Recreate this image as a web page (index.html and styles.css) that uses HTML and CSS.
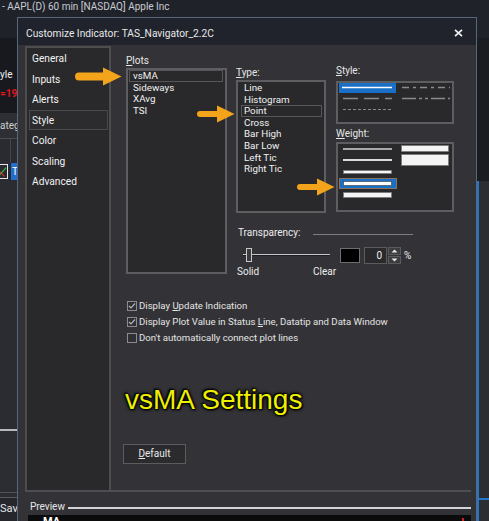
FILE: index.html
```html
<!DOCTYPE html>
<html lang="en">
<head>
<meta charset="utf-8">
<title>Customize Indicator</title>
<link rel="stylesheet" href="styles.css">
</head>
<body>
<div class="app">
  <div class="app-title">- AAPL(D) 60 min [NASDAQ] Apple Inc</div>
  <div class="app-body">
    <div class="strip-left">
      <div class="sl-a"><div class="sl-yle">yle</div><div class="sl-red">=19</div></div>
      <div class="sl-b">ateg</div>
      <div class="sl-c"><div class="sl-c-cell"></div></div>
      <div class="sl-d">
        <span class="sl-icon"><svg width="8" height="13" viewBox="0 0 8 13"><path d="M0 10 L7 2" stroke="#2fbf3a" stroke-width="1.3"/><path d="M0 7 L5 12" stroke="#e0302a" stroke-width="1.2"/></svg></span>
        <span class="sl-t">T</span>
      </div>
      <div class="sl-e"></div>
      <div class="sl-f"></div>
      <div class="sl-save">Sav</div>
    </div>
    <div class="strip-right">
      <div class="sr-a"></div>
      <div class="sr-b"></div>
      <div class="sr-c"></div>
    </div>
  </div>
</div>

<div class="dialog">
  <div class="titlebar">
    <span class="title">Customize Indicator: TAS_Navigator_2.2C</span>
    <svg class="close" width="9" height="8" viewBox="0 0 9 8"><path d="M1 0.8 L8 7.2 M8 0.8 L1 7.2" stroke="#f2f2f2" stroke-width="1.7"/></svg>
  </div>
  <div class="dbody">
    <div class="main">
      <nav class="nav">
        <div class="nav-item">General</div>
        <div class="nav-item">Inputs</div>
        <div class="nav-item">Alerts</div>
        <div class="nav-item sel">Style</div>
        <div class="nav-item">Color</div>
        <div class="nav-item">Scaling</div>
        <div class="nav-item">Advanced</div>
      </nav>
      <div class="content">
        <div class="top-row">
          <div class="plots">
            <div class="lbl"><u>P</u>lots</div>
            <div class="listbox plots-list">
              <div class="li sel">vsMA</div>
              <div class="li">Sideways</div>
              <div class="li">XAvg</div>
              <div class="li">TSI</div>
            </div>
          </div>
          <div class="right">
            <div class="right-top">
              <div class="type">
                <div class="lbl"><u>T</u>ype:</div>
                <div class="listbox type-list">
                  <div class="li">Line</div>
                  <div class="li">Histogram</div>
                  <div class="li sel">Point</div>
                  <div class="li">Cross</div>
                  <div class="li">Bar High</div>
                  <div class="li">Bar Low</div>
                  <div class="li">Left Tic</div>
                  <div class="li">Right Tic</div>
                </div>
              </div>
              <div class="style-col">
                <div class="lbl"><u>S</u>tyle:</div>
                <div class="gbox style-box">
                  <svg width="114" height="39" viewBox="0 0 114 39">
                    <rect x="1" y="0" width="57" height="10" fill="#1a6fc6"/>
                    <line x1="4" y1="4.5" x2="54" y2="4.5" stroke="#ffffff" stroke-width="1.5"/>
                    <line x1="64" y1="4.5" x2="112" y2="4.5" stroke="#8a8a8a" stroke-width="1.5" stroke-dasharray="7 4 3 4"/>
                    <line x1="5" y1="15.5" x2="54" y2="15.5" stroke="#8a8a8a" stroke-width="1.5" stroke-dasharray="15 6"/>
                    <line x1="64" y1="15.5" x2="112" y2="15.5" stroke="#8a8a8a" stroke-width="1.5" stroke-dasharray="14 3 3 3 3 3"/>
                    <line x1="5" y1="26.5" x2="54" y2="26.5" stroke="#8a8a8a" stroke-width="1.2" stroke-dasharray="3 2"/>
                  </svg>
                </div>
                <div class="lbl weight-lbl"><u>W</u>eight:</div>
                <div class="gbox weight-box">
                  <svg width="114" height="66" viewBox="0 0 114 66">
                    <rect x="5" y="4" width="49" height="2" fill="#a8a8a8"/>
                    <rect x="5" y="15" width="49" height="2" fill="#dcdcdc"/>
                    <rect x="5.5" y="26.5" width="48" height="3" fill="#f4f4f4" stroke="#7a7a7a" stroke-width="0.8"/>
                    <rect x="1.5" y="34.5" width="57" height="10" fill="#1a6fc6" stroke="#8a7460" stroke-width="1"/>
                    <rect x="5.5" y="37.5" width="48" height="4" fill="#ffffff" stroke="#3a3a3a" stroke-width="0.6"/>
                    <rect x="5.5" y="48.5" width="48" height="5" fill="#f4f4f4" stroke="#7a7a7a" stroke-width="0.8"/>
                    <rect x="63.5" y="1.5" width="47" height="6" fill="#f4f4f4" stroke="#7a7a7a" stroke-width="0.8"/>
                    <rect x="63.5" y="10.5" width="47" height="11" fill="#f4f4f4" stroke="#7a7a7a" stroke-width="0.8"/>
                  </svg>
                </div>
              </div>
            </div>
            <div class="transp">
              <div class="transp-head"><span class="transp-lbl">Transparency:</span><span class="transp-line"></span></div>
              <div class="transp-ctrl">
                <div class="slider"><div class="track"></div><div class="thumb"></div></div>
                <div class="swatch"></div>
                <div class="spin-val">0</div>
                <div class="spin-btns">
                  <div class="spin-btn"><svg width="7" height="4" viewBox="0 0 7 4"><path d="M0.5 3.5 L3.5 0.5 L6.5 3.5 Z" fill="#e8e8e8"/></svg></div>
                  <div class="spin-btn"><svg width="7" height="4" viewBox="0 0 7 4"><path d="M0.5 0.5 L3.5 3.5 L6.5 0.5 Z" fill="#e8e8e8"/></svg></div>
                </div>
                <div class="pct">%</div>
              </div>
              <div class="transp-ends"><span class="solid">Solid</span><span>Clear</span></div>
            </div>
          </div>
        </div>
        <div class="checks">
          <div class="check-row"><span class="cb"><svg width="8" height="8" viewBox="0 0 8 8"><path d="M1 4 L3 6 L7 1.5" stroke="#b4b4b4" fill="none" stroke-width="1.2"/></svg></span><span class="check-lbl">Display <u>U</u>pdate Indication</span></div>
          <div class="check-row"><span class="cb"><svg width="8" height="8" viewBox="0 0 8 8"><path d="M1 4 L3 6 L7 1.5" stroke="#b4b4b4" fill="none" stroke-width="1.2"/></svg></span><span class="check-lbl">Display Plot Value in Status <u>L</u>ine, Datatip and Data Window</span></div>
          <div class="check-row"><span class="cb"></span><span class="check-lbl">Don't automatically connect plot lines</span></div>
        </div>
        <div class="headline">vsMA Settings</div>
        <div class="btn"><u>D</u>efault</div>
      </div>
    </div>
    <div class="preview">
      <div class="preview-head"><span class="preview-lbl">Preview</span><span class="preview-line"></span></div>
      <div class="preview-box"><span class="preview-ma">MA</span><span class="preview-red"></span></div>
    </div>
  </div>
</div>

<svg class="arrow a1" width="47" height="19" viewBox="0 0 47 19"><path d="M4 5.5 H28 V0.5 L46.5 9.5 L28 18.5 V13.5 H4 A4 4 0 0 1 4 5.5 Z" fill="#f3a41b"/></svg>
<svg class="arrow a2" width="38" height="18" viewBox="0 0 38 18"><path d="M3 6 H20 V0.5 L37.5 9 L20 17.5 V12 H3 A3 3 0 0 1 3 6 Z" fill="#f3a41b"/></svg>
<svg class="arrow a3" width="38" height="18" viewBox="0 0 38 18"><path d="M3 6 H20 V0.5 L37.5 9 L20 17.5 V12 H3 A3 3 0 0 1 3 6 Z" fill="#f3a41b"/></svg>
</body>
</html>
```

FILE: styles.css
```css
* { box-sizing: border-box; }
html, body { margin: 0; padding: 0; }
body {
  width: 489px;
  height: 521px;
  overflow: hidden;
  position: relative;
  background: #2b2d33;
  font-family: Roboto, "Noto Sans", sans-serif;
  font-size: 10px;
  color: #ececec;
}
u { text-decoration: underline; text-underline-offset: 1px; }

/* backdrop application window */
.app { display: flex; flex-direction: column; height: 521px; }
.app-title {
  height: 38px;
  background: #20222a;
  padding: 1px 0 0 2px;
  line-height: 12px;
  color: #c9cbd0;
}
.app-body { flex: 1; display: flex; justify-content: space-between; }
.strip-left { width: 17px; display: flex; flex-direction: column; overflow: hidden; }
.sl-a { height: 75px; background: #18191e; padding-top: 31px; line-height: 12px; white-space: nowrap; }
.sl-yle { color: #f0f0f0; }
.sl-red { color: #e0161e; font-weight: bold; margin-top: 7px; }
.sl-b { height: 25px; background: #2e2f34; line-height: 25px; color: #cfcfcf; white-space: nowrap; overflow: hidden; }
.sl-c { height: 24px; background: #2a2b30; border-top: 1px solid #4a4b50; display: flex; }
.sl-c-cell { width: 11px; border-right: 1px solid #45464c; }
.sl-d { height: 19px; background: #2a2b30; display: flex; align-items: center; gap: 3px; }
.sl-icon { width: 8px; height: 15px; border: 1px solid #e8e8e8; border-left: none; display: flex; align-items: center; }
.sl-t { width: 7px; height: 17px; background: #1e6fd0; color: #fff; line-height: 17px; padding-left: 1px; }
.sl-e { flex: 1; background: #2a2c32; }
.sl-f { height: 64px; border-top: 2px solid #b8b8bc; background: #2b2d33; border-bottom: 1px solid #50525a; }
.sl-save { height: 24px; margin-top: 4px; border-top: 1px solid #5a5a5e; background: #25272c; font-size: 11px; line-height: 22px; color: #e6e6e6; white-space: nowrap; overflow: hidden; }

.strip-right { width: 12px; display: flex; flex-direction: column; }
.sr-a { height: 143px; background: #1a1c21; }
.sr-b { flex: 1; background: #2b2d33; border-left: 2px solid #2676c8; }
.sr-c { height: 23px; background: #2b2d33; border-top: 2px solid #2676c8; border-left: 2px solid #2676c8; }

/* dialog */
.dialog {
  position: absolute;
  left: 17px;
  top: 17px;
  width: 460px;
  height: 504px;
  border: 1px solid #56677e;
  border-bottom: none;
  background: #333337;
  display: flex;
  flex-direction: column;
}
.titlebar {
  height: 27px;
  flex: none;
  background: #20232b;
  display: flex;
  align-items: center;
  justify-content: space-between;
  padding: 3px 13px 0 8px;
}
.title { color: #e8e8ea; font-size: 10.2px; }
.close { display: block; margin-top: -1px; }

.dbody { flex: 1; padding: 1px 5px 0 7px; display: flex; flex-direction: column; }
.main { height: 446px; flex: none; display: flex; border-bottom: 2px solid #4e4e52; }
.nav {
  width: 86px;
  border: 2px solid #4d4d50;
  border-bottom: none;
  background: #29292c;
}
.nav-item {
  height: 20.5px;
  line-height: 17.5px;
  margin: 0 1px 0 2px;
  padding: 1px 0 0 2px;
  border: 1px solid transparent;
  color: #f2f2f2;
  font-size: 10.2px;
}
.nav-item.sel { border-color: #4a4a4e; background: #2c2c2f; }

.content { flex: 1; padding: 9px 0 0 15px; display: flex; flex-direction: column; }
.top-row { display: flex; align-items: flex-start; }
.lbl { height: 12px; line-height: 12px; color: #e6e6e6; }
.listbox { border: 2px solid #5e5e61; background: #29292c; }
.li {
  height: 11.6px;
  line-height: 11.6px;
  font-size: 9.8px;
  color: #f0f0f0;
  white-space: nowrap;
}
.li.sel { box-shadow: inset 0 0 0 1px #56565a; }
.plots { width: 101px; }
.plots-list { margin-top: 1px; height: 206px; }
.plots-list .li { margin: 0 2px 0 1px; padding-left: 4px; }

.right { margin-left: 9px; width: 220px; display: flex; flex-direction: column; }
.right-top { display: flex; align-items: flex-start; }
.type { width: 90px; margin-top: 12px; }
.type-list { margin-top: 1px; height: 133px; }
.type-list .li { margin: 0 2px 0 3px; padding-left: 3px; }
.style-col { width: 118px; margin-left: 10px; margin-top: 10px; }
.gbox { border: 2px solid #5e5e61; background: #29292c; }
.gbox svg { display: block; }
.style-box { margin-top: 4px; height: 43px; }
.weight-lbl { margin-top: 4px; }
.weight-box { margin-top: 2px; height: 70px; }

.transp { margin-top: 14px; }
.transp-head { display: flex; align-items: center; height: 12px; }
.transp-lbl { width: 77px; padding-left: 2px; line-height: 12px; }
.transp-line { width: 100px; height: 1px; background: #7e7e82; margin-top: 2px; }
.transp-ctrl { margin-top: 8px; height: 17px; display: flex; align-items: center; }
.slider { position: relative; margin-left: 7px; width: 87px; height: 17px; }
.track { margin-top: 7px; height: 2px; border-top: 1px solid #c4c4c4; border-bottom: 1px solid #1e1e20; }
.thumb {
  position: absolute;
  left: 3px;
  top: 1px;
  width: 6px;
  height: 14px;
  border: 1px solid #c8c8c8;
  background: #3a3a3d;
}
.swatch { margin-left: 10px; width: 20px; height: 15px; background: #000; border: 1px solid #6e6e72; }
.spin-val {
  margin-left: 4px;
  width: 23px;
  height: 17px;
  border: 1px solid #5c5c60;
  background: #2a2a2c;
  text-align: right;
  padding-right: 4px;
  line-height: 15px;
}
.spin-btns { margin-left: 1px; width: 13px; height: 17px; display: flex; flex-direction: column; gap: 1px; }
.spin-btn {
  flex: 1;
  background: #3c3c3f;
  border: 1px solid #5a5a5e;
  display: flex;
  align-items: center;
  justify-content: center;
}
.spin-btn svg { display: block; }
.pct { margin-left: 3px; line-height: 12px; }
.transp-ends { margin-top: 2px; height: 12px; line-height: 12px; display: flex; }
.solid { width: 77px; padding-left: 1px; }

.checks { margin-top: 20px; }
.check-row { height: 16px; display: flex; align-items: center; }
.cb {
  margin-left: 1px;
  width: 10px;
  height: 10px;
  border: 1px solid #8c8c90;
  background: #303033;
  display: flex;
  align-items: center;
  justify-content: center;
}
.cb svg { display: block; }
.check-lbl { margin-left: 2px; color: #e4e4e4; font-size: 9.6px; line-height: 12px; }

.headline {
  margin-top: 38px;
  margin-left: -1px;
  font-family: "Liberation Sans", Arial, sans-serif;
  font-size: 28px;
  line-height: 32px;
  height: 32px;
  color: #eef000;
  text-shadow: 0 0 2px #000, 0 0 2px #000, 1px 1px 2px #000, -1px -1px 2px #000, 0 0 4px #000;
}
.btn {
  margin-top: 28px;
  margin-left: -3px;
  width: 63px;
  height: 20px;
  border: 1px solid #5c5c60;
  background: #2b2b2e;
  text-align: center;
  line-height: 18px;
  color: #e8e8e8;
}

.preview { padding-top: 9px; }
.preview-head { display: flex; align-items: center; height: 12px; }
.preview-lbl { padding-left: 5px; line-height: 12px; color: #e6e6e6; }
.preview-line { flex: 1; margin-left: 3px; height: 2px; background: #d4d4d6; margin-top: 2px; }
.preview-box {
  margin: 2px 0 0 3px;
  height: 30px;
  background: #0b0b0c;
  padding: 0 0 0 15px;
  position: relative;
}
.preview-ma { display: block; font-size: 11px; font-weight: bold; color: #fff; line-height: 14px; margin-top: 1px; }
.preview-red { position: absolute; right: 7px; top: 3px; width: 2px; height: 3px; background: #d02020; }

.arrow { position: absolute; display: block; }
.a1 { left: 75px; top: 67px; }
.a2 { left: 197px; top: 105px; }
.a3 { left: 297px; top: 178px; }
```
